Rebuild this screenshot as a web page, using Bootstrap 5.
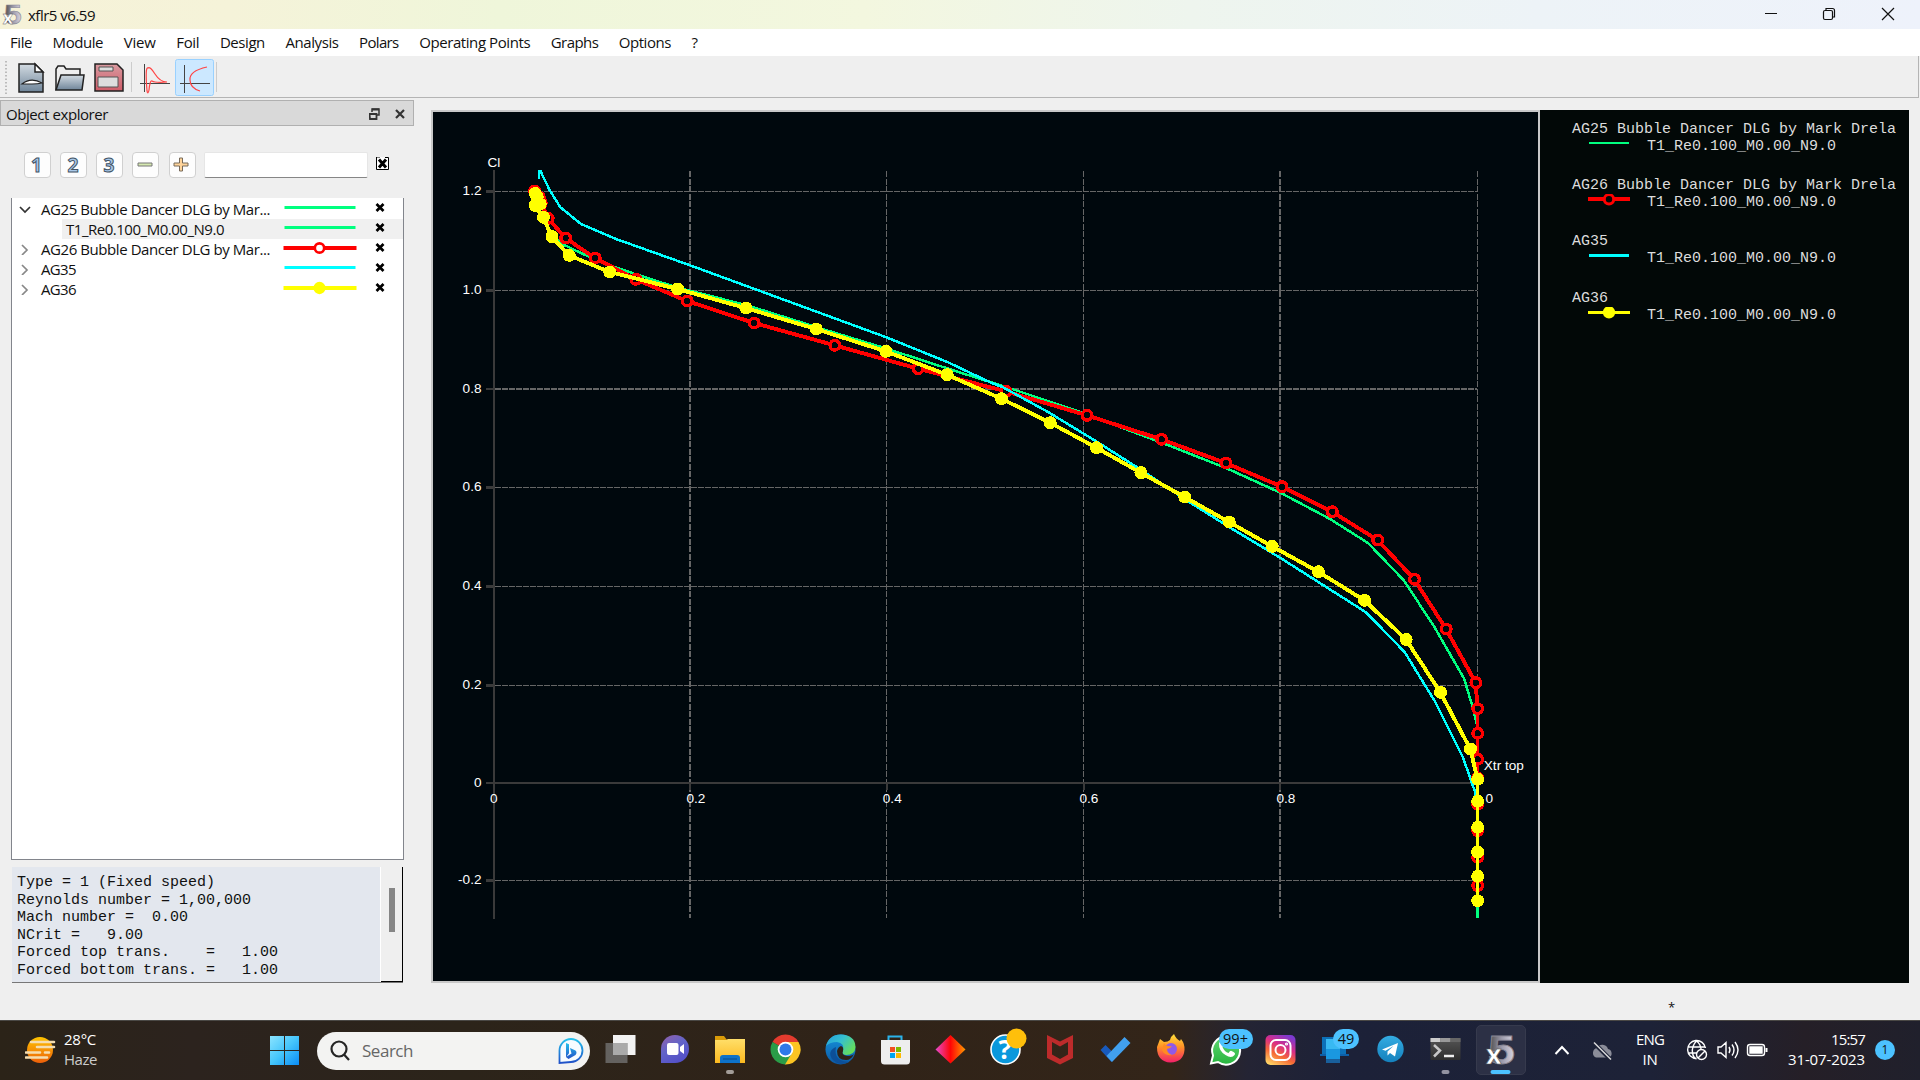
<!DOCTYPE html>
<html lang="en">
<head>
<meta charset="utf-8">
<title>xflr5 v6.59</title>
<link href="https://cdn.jsdelivr.net/npm/bootstrap@5.3.0/dist/css/bootstrap.min.css" rel="stylesheet">
<style>
body{width:1920px;height:1080px;overflow:hidden;background:#efefef;color:#111;font-family:"Open Sans","Noto Sans",sans-serif;font-size:15px;line-height:20px}
svg{display:block;flex:none}
[data-w]{display:inline-block;white-space:nowrap}
.titlebar{height:29px;background:linear-gradient(90deg,#f6f2d8 0,#f5f3d9 12%,#eff6da 26%,#f3f7df 45%,#eef5ee 62%,#edf3f7 80%,#eef2fb 100%)}
.menubar{height:27px;gap:20.6px;padding:0 10px 2px}
.toolbar{height:42px;width:1919px;border-bottom:1px solid #b4b4b4;border-right:1px solid #b4b4b4}
.dock{width:414px;padding-top:2px}
.dock-title{height:26px;background:#d9d9d9;border:1px solid #b0b0b0;padding-left:5px;padding-top:1px}
.dock-tools{padding:26px 0 0 24px;height:72px}
.tool{width:27px;height:26px;border:1px solid #d0d0d0;border-radius:4px;background:#fdfdfd;margin-right:9px}
.filter{width:164px;height:26px;background:#fff;border:1px solid #e6e6e6;border-bottom:1px solid #868686;border-radius:2px;margin-left:-1px}
.tree{width:393px;height:662px;margin-left:11px;background:#fff;border:1px solid #82858c;border-top:0;padding-top:1px}
.tree-row{height:20px}
.tree-row .chev{width:29px;padding-left:7px}
.tree-row .label{width:243px}
.tree-row .swatch{margin-left:-1px}
.tree-row.sel .label,.tree-row.sel .swatch{background:#f0f0f0}
.info{width:391px;height:116px;margin:7px 0 0 12px;border-bottom:1px solid #777}
.info pre{width:369px;background:#e3e7ee;font:15px/17.6px "Liberation Mono",monospace;padding:7px 0 0 5px;border-right:1px solid #fff;overflow:hidden;color:#111}
.info .sbar{width:22px;border-right:1px solid #000;border-bottom:1px solid #000;padding:21px 0 0 8px}
.thumb{width:6px;height:44px;background:#868686}
.graph{width:1109px;height:873px;margin:12px 0 0 17px;border:2px solid #c8c8c8;background:#00080d}
.legend{width:369px;height:873px;margin-top:12px;background:#020807;color:#dcdcdc;font:15px/17px "Liberation Mono",monospace;padding:11px 0 0 32px;white-space:nowrap}
.legend .entry{height:56px}
.entry .name{height:17px}
.entry .run{height:16px}
.entry svg{margin:-3px 16px 0 15px}
.entry.low{height:57px}
.status{position:absolute;left:1668px;top:997px;font-size:13px}
.taskbar{height:60px;border-top:1px solid #4a4845;color:#fff;background:linear-gradient(90deg,#2b2318 0,#2c231e 10%,#2c241a 24%,#302318 45%,#332519 61%,#242434 65%,#1c2138 70%,#1d2237 86%,#251f27 94%,#20202c 100%)}
.weather{width:270px;padding-left:25px}
.search{width:273px;height:38px;border-radius:19px;background:#f3f3f2;margin:0 3px 0 18px;padding:0 6px 0 13px;color:#666;font-size:17px}
.slot{width:55px;height:59px;position:relative;top:-1px}
.bubble{position:absolute;background:#4cc2ff;color:#111;border-radius:10px;height:20px;line-height:20px;text-align:center;font-size:14.5px;top:9px}
.active-app{position:absolute;left:2.5px;top:5px;width:50px;height:50px;border-radius:5px;background:#2c3045;border:1px solid #363a4d}
</style>
<script src="https://cdn.jsdelivr.net/npm/bootstrap@5.3.0/dist/js/bootstrap.bundle.min.js"></script>
</head>
<body class="d-flex flex-column">
<svg width="0" height="0" class="position-absolute">
<defs>
<linearGradient id="five" x1="0" x2="1"><stop offset="0" stop-color="#444"/><stop offset=".5" stop-color="#9a98a8"/><stop offset="1" stop-color="#dcdae8"/></linearGradient>
<linearGradient id="steel" x2="0" y2="1"><stop stop-color="#d3dbe2"/><stop offset="1" stop-color="#6f8599"/></linearGradient>
<linearGradient id="rose" x2="0" y2="1"><stop stop-color="#d99aa0"/><stop offset="1" stop-color="#cf5c68"/></linearGradient>
<linearGradient id="win" x2="1" y2="1"><stop stop-color="#8be4ff"/><stop offset=".5" stop-color="#45c5fb"/><stop offset="1" stop-color="#0a8cf5"/></linearGradient>
<linearGradient id="sun" x2="0" y2="1"><stop stop-color="#ffc400"/><stop offset="1" stop-color="#ec5f0a"/></linearGradient>
<linearGradient id="bing" x2="0" y2="1"><stop stop-color="#25c1ec"/><stop offset="1" stop-color="#2050c8"/></linearGradient>
<linearGradient id="chat" x2=".6" y2="1"><stop stop-color="#9560a8"/><stop offset=".5" stop-color="#6264c8"/><stop offset="1" stop-color="#5450c8"/></linearGradient>
<linearGradient id="fold" x2="0" y2="1"><stop stop-color="#ffdf6a"/><stop offset="1" stop-color="#fcb91f"/></linearGradient>
<linearGradient id="edgeA" x2="1" y2=".6"><stop stop-color="#249fdc"/><stop offset=".5" stop-color="#35bfd0"/><stop offset="1" stop-color="#65de5c"/></linearGradient>
<linearGradient id="edgeB" x2="0" y2="1"><stop stop-color="#1694dd"/><stop offset="1" stop-color="#0c59a4"/></linearGradient>
<linearGradient id="dia"><stop stop-color="#e64bd0"/><stop offset=".5" stop-color="#ff0505"/><stop offset="1" stop-color="#ff9a00"/></linearGradient>
<linearGradient id="fox" x2="0" y2="1"><stop stop-color="#ffe13a"/><stop offset=".45" stop-color="#ff9226"/><stop offset="1" stop-color="#f2206a"/></linearGradient>
<linearGradient id="insta" x1=".2" y1="1" x2=".7" y2="0"><stop stop-color="#ffd465"/><stop offset=".35" stop-color="#f66a35"/><stop offset=".65" stop-color="#d92d87"/><stop offset="1" stop-color="#7d3ad0"/></linearGradient>
<linearGradient id="tg" x2="0" y2="1"><stop stop-color="#34ace2"/><stop offset="1" stop-color="#1581bd"/></linearGradient>
<linearGradient id="wa" x2="0" y2="1"><stop stop-color="#5fd670"/><stop offset="1" stop-color="#27b43e"/></linearGradient>
<linearGradient id="term" x2="0" y2="1"><stop stop-color="#555"/><stop offset="1" stop-color="#2e2e2e"/></linearGradient>
<g id="x"><path d="M1 1L8 8M8 1L1 8" stroke="#000" stroke-width="2.7"/></g>
<g id="logo5"><text x="3" y="29" textLength="27" lengthAdjust="spacingAndGlyphs" font-family="Liberation Sans" font-weight="bold" font-size="41" fill="url(#five)" stroke="#8a8896" stroke-width=".8">5</text><text x="1" y="29" font-family="Open Sans" font-weight="bold" font-size="27" fill="#fff" stroke="#555" stroke-width=".6">x</text></g>
</defs>
</svg>

<header class="titlebar d-flex align-items-center">
<svg width="21" height="21" viewBox="0 -1 32 32" class="flex-shrink-0" style="margin:0 5px 0 2px"><use href="#logo5"/></svg>
<span data-w="67">xflr5 v6.59</span>
<svg class="ms-auto" width="155" height="29" fill="none" stroke="#111" stroke-width="1.2"><path d="M0 13.500h12M117 8l12 12M129 8l-12 12"/><rect x="58.500" y="10.500" width="9" height="9" rx="1.500"/><path d="M61 10.500V8.500h6.500q2 0 2 2V17h-2"/></svg>
</header>

<nav class="menubar bg-white d-flex align-items-center">
<span data-w="22">File</span><span data-w="50.500">Module</span><span data-w="32">View</span><span data-w="23">Foil</span><span data-w="45">Design</span><span data-w="53">Analysis</span><span data-w="39.500">Polars</span><span data-w="111">Operating Points</span><span data-w="47.500">Graphs</span><span data-w="52">Options</span><span>?</span>
</nav>

<div class="toolbar">
<svg width="230" height="41" fill="none" stroke="#222" stroke-width="1.500">
<path d="M6 5v33" stroke="#bbb" stroke-width="2" stroke-dasharray="1.500 2"/>
<path d="M19 8h16l8 8v20H19z" fill="url(#steel)"/><path d="M35 8v8h8z" fill="#fff"/><path d="M22 28q9-7 20-1q-4 1-10 1z" fill="#fff" stroke-width="1.200"/>
<path d="M56 34V13l2-3h6l2 3h14v6" fill="#eee"/><path d="M56 34l5-15h23l-2 15z" fill="url(#steel)"/>
<path d="M95 8h22l6 6v21H95z" fill="url(#rose)"/><path d="M99 11h14v4H99zM98 21h20v10H98z" fill="#ddd" stroke="#555" stroke-width="1"/>
<path d="M131.500 6v30M216.500 6v30" stroke="#ccc" stroke-width="1"/>
<path d="M144.500 8v28M140 27.500h30" stroke="#444" stroke-width="1"/><path d="M147 35q-2-25 1-23q2-2 7 6q5 8 12 8q-12 1-15-1q-2-1-3 9q-1 5-2 1" stroke="#ff4444" stroke-width="1.200"/>
<rect x="175.500" y="3.500" width="38" height="36" rx="2" fill="#cce8ff" stroke="#99d1ff" stroke-width="1"/>
<path d="M184.500 9v28M180 27.500h30" stroke="#444" stroke-width="1"/><path d="M207 11q-18 4-17 13q0 8 10 11" stroke="#ff4444" stroke-width="1.200"/>
</svg>
</div>

<main class="d-flex flex-grow-1">
<aside class="dock">
<div class="dock-title d-flex align-items-center"><span data-w="102">Object explorer</span>
<svg class="ms-auto" width="44" height="24" fill="none" stroke="#333" stroke-width="1.500"><path d="M3 10V7h7v6H8"/><path d="M3 7.500h7M0.500 12h7v5h-6.500z" stroke-width="1.800"/><path d="M27 8l8 8M35 8l-8 8" stroke-width="2.200"/></svg></div>
<div class="dock-tools d-flex">
<div class="tool"><svg width="25" height="24"><text x="6" y="19" font-size="19" font-weight="bold" fill="#a9c9ea" stroke="#456" stroke-width="1">1</text></svg></div>
<div class="tool"><svg width="25" height="24"><text x="6.500" y="19" font-size="19" font-weight="bold" fill="#a9c9ea" stroke="#456" stroke-width="1">2</text></svg></div>
<div class="tool"><svg width="25" height="24"><text x="6.500" y="19" font-size="19" font-weight="bold" fill="#a9c9ea" stroke="#456" stroke-width="1">3</text></svg></div>
<div class="tool"><svg width="25" height="24"><path d="M5 10h14v3H5z" fill="#d5e8b0" stroke="#777"/></svg></div>
<div class="tool" style="margin-left:1px"><svg width="25" height="24"><path d="M4 10h5.500V5h3v5H18v3h-5.500v5h-3v-5H4z" fill="#ffd49a" stroke="#776a5a"/></svg></div>
<div class="filter"></div>
<svg class="ms-2" width="14" height="14" style="margin-top:5px"><path d="M.5 0v12.500h12V.5H9M.5 0H4" fill="#fff" stroke="#000"/><path d="M3 2.500l7 8M10 2.500l-7 8" stroke="#000" stroke-width="3"/></svg>
</div>
<div class="tree" id="tree"></div>
<div class="info d-flex"><pre class="m-0">Type = 1 (Fixed speed)
Reynolds number = 1,00,000
Mach number =  0.00
NCrit =   9.00
Forced top trans.    =   1.00
Forced bottom trans. =   1.00</pre><div class="sbar"><div class="thumb"></div></div></div>
</aside>
<section class="graph"><svg id="plot" width="1105" height="869" viewBox="433 112 1105 869" font-family="Liberation Sans,sans-serif" font-size="13.600" fill="#fff"></svg></section>
<section class="legend" id="legend"></section>
</main>
<span class="status">*</span>

<footer class="taskbar d-flex align-items-center">
<div class="weather d-flex align-items-center">
<svg width="32" height="30"><circle cx="15" cy="14" r="13" fill="url(#sun)"/><path d="M6 6h23M12 11h17M1 16.500h14M20 16.500h4M1 21.500h21" stroke="#f5ddb0" stroke-width="2.600" stroke-linecap="round"/></svg>
<div class="ps-2" style="margin:-3px 0 0 -1px"><div><span data-w="32">28°C</span></div><div style="color:#ccc"><span data-w="33">Haze</span></div></div>
</div>
<svg width="29" height="29"><path d="M0 0h14v14H0zM15 0h14v14H15zM0 15h14v14H0zM15 15h14v14H15z" fill="url(#win)"/></svg>
<div class="search d-flex align-items-center">
<svg width="20" height="22" fill="none" stroke="#252525" stroke-width="2.200"><circle cx="9" cy="9" r="7.500"/><path d="M14 14.500l5 5.500"/></svg>
<span data-w="51" style="margin-left:12px">Search</span>
<svg class="ms-auto" width="26" height="26"><path d="M1.500 25V12.500A11.500 11.500 0 1 1 13 24z" fill="#f6fbff" stroke="url(#bing)" stroke-width="1.800"/><path d="M8 5l3 1.200v9l-3 4zM12 10l5.500 2.500q2 2 0 4.500L10.500 21L8 19l5.500-3.500z" fill="url(#bing)"/></svg>
</div>
<div class="slot"><svg width="55" height="59"><rect x="20" y="15" width="22.500" height="20" fill="#f2f2f2"/><rect x="12.500" y="23" width="22" height="20" fill="#777" fill-opacity=".75"/><path d="M20 23h14.500v12H20z" fill="#aaa"/></svg></div>
<div class="slot"><svg width="55" height="59"><path d="M13 43v-14a14 14 0 1 1 14 14z" fill="url(#chat)"/><rect x="19" y="23" width="11.500" height="12" rx="2" fill="#fff"/><path d="M32 27l4-3v10l-4-3z" fill="#fff"/></svg></div>
<div class="slot"><svg width="55" height="59"><path d="M12 20v-4h9l3 4z" fill="#d99b08"/><path d="M12 20h11l2-1h17v24H12z" fill="url(#fold)"/><path d="M17 43v-5q0-3 3-3h14q3 0 3 3v5z" fill="#0d72c9"/><path d="M20 39h14" stroke="#074a8c"/><rect x="23" y="50" width="8" height="4" rx="2" fill="#a39d98"/></svg></div>
<div class="slot"><svg width="55" height="59"><path d="M27.500 29.500L14.500 22A15 15 0 0 1 40.500 22z" fill="#e33b2e"/><path d="M27.500 29.500V22h13A15 15 0 0 1 27 44.500z" fill="#fcc422"/><path d="M27.500 29.500L34 33L27 44.500A15 15 0 0 1 14.500 22z" fill="#2a9c48"/><circle cx="27.500" cy="29.500" r="7.800" fill="#fff"/><circle cx="27.500" cy="29.500" r="6" fill="#2f79e8"/></svg></div>
<div class="slot"><svg width="55" height="59"><circle cx="27.500" cy="29.500" r="15" fill="url(#edgeB)"/><path d="M13 26Q16 14.500 28 14.500Q42 15 42.500 27Q42 35 33 35Q28 34 30 31Q32 23 24 22Q17 22 13 26z" fill="url(#edgeA)"/><path d="M30 31q-2 4 4 5q5 0 7-2q-3 6-8 6q-9 0-9-9q1-4 4-5q3 1 2 5" fill="#302318"/><path d="M23 27q-3 14 13 15q-10 5-17-3q-5-8 4-12" fill="#0c4f98"/></svg></div>
<div class="slot"><svg width="55" height="59"><path d="M20.500 21v-4.500h13V21" fill="none" stroke="#2bb3ea" stroke-width="2"/><path d="M13 20h29v21q0 3.500-3.500 3.500h-22q-3.500 0-3.500-3.500z" fill="#eee"/><path d="M22 27h5v5h-5z" fill="#f25022"/><path d="M28 27h5v5h-5z" fill="#7fba00"/><path d="M22 33h5v5h-5z" fill="#00a4ef"/><path d="M28 33h5v5h-5z" fill="#ffb900"/></svg></div>
<div class="slot"><svg width="55" height="59"><path d="M27.500 15L42.500 29.500L27.500 43.500L12.500 29.500z" fill="url(#dia)"/></svg></div>
<div class="slot"><svg width="55" height="59"><circle cx="27.500" cy="29.500" r="14.500" fill="#0a98dc" stroke="#fff" stroke-width="1.600"/><text x="20.500" y="39" font-size="27" font-weight="bold" fill="#fff">?</text><circle cx="38.500" cy="18.500" r="10" fill="#ffbf0b"/></svg></div>
<div class="slot"><svg width="55" height="59"><path d="M14 15l13 6.500L40 15v23l-13 6.500L14 38zM19 22v12.500l8 4.500l8-4.500V22l-8 4.500z" fill="#bd2b2b" fill-rule="evenodd"/></svg></div>
<div class="slot"><svg width="55" height="59"><path d="M12.500 30l5-5l10 10l-4 7z" fill="#185abd"/><path d="M36.500 17l6 6L24 42l-5.500-6z" fill="#41a0ef"/></svg></div>
<div class="slot"><svg width="55" height="59"><path d="M14 27l3-8l4 3q4 0 6-2q1-4 4-6q2 5 6 7l1-2q4 5 3.500 11q-1 12-14 12.500Q14 42 14 27z" fill="url(#fox)"/><circle cx="28" cy="29" r="6" fill="#9059e8"/><path d="M21 23q2 4 8 3q-2 3-5 3q0 4 5 6q-8 1-10-5z" fill="#ff8b22"/></svg></div>
<div class="slot"><svg width="55" height="59"><path d="M13 43.500l2-8A14 14 0 1 1 20 42z" fill="url(#wa)" stroke="#fff" stroke-width="2"/><path d="M21 23q2-3 4 1q1 1-.5 3q2 5 6 6q2-3 3-2q5 2 3 4q-3 4-9 0q-7-4-6.500-12" fill="#fff"/></svg><span class="bubble" style="left:20.500px;width:34px">99+</span></div>
<div class="slot"><svg width="55" height="59" fill="none" stroke="#fff" stroke-width="2"><rect x="12.500" y="15" width="30" height="30" rx="5" fill="url(#insta)" stroke="none"/><rect x="17.500" y="20" width="20" height="20" rx="5.500"/><circle cx="27.500" cy="30" r="5"/><circle cx="33.500" cy="24" r=".6"/></svg></div>
<div class="slot"><svg width="55" height="59"><path d="M14 17h24v19H14z" fill="#0c70b8"/><path d="M12 34h10v2H12zM30 34h11v2H30z" fill="#0d5fa8"/><path d="M18 19h14v24H18z" fill="#1a98e0"/><path d="M18 19h14v10H18z" fill="#38b9f2"/><path d="M18 39h14v4H18z" fill="#195f9b"/></svg><span class="bubble" style="left:25px;width:26px">49</span></div>
<div class="slot"><svg width="55" height="59"><circle cx="27.500" cy="29" r="13.200" fill="url(#tg)"/><path d="M19 29.500l16-6.500l-3 13.500l-5-3.500l-2.500 2.500v-4l6-5.500l-8 4.800z" fill="#fff"/></svg></div>
<div class="slot"><svg width="55" height="59"><rect x="12.500" y="18" width="30" height="22" rx="1" fill="url(#term)"/><path d="M12.500 18h10v4h-10z" fill="#ccc"/><path d="M22.500 18h10v4h-10z" fill="#999"/><path d="M32.500 18h10v4h-10z" fill="#666"/><path d="M16 25l6 5.500l-6 6" fill="none" stroke="#c8c8c8" stroke-width="2.500"/><path d="M26 36h10" stroke="#eee" stroke-width="2.500"/><rect x="23.500" y="50" width="8" height="4" rx="2" fill="#9292a0"/></svg></div>
<div class="slot"><div class="active-app"></div><svg class="position-relative" width="55" height="59"><use href="#logo5" x="12" y="15"/><rect x="17.500" y="50" width="20" height="4" rx="2" fill="#4cc2ff"/></svg></div>
<div class="d-flex align-items-center flex-grow-1 ps-4">
<svg width="68" height="26" fill="none" style="margin-left:2px"><path d="M1.500 16l6.500-7l6.500 7" stroke="#fff" stroke-width="2"/><path d="M42 19.500a5 5 0 0 1 1-9.500a6 6 0 0 1 11 1a4.500 4.500 0 0 1 1 8.500z" fill="#8b8d99"/><path d="M39 4l18 18" stroke="#1d2237" stroke-width="4"/><path d="M40 4.500l17 17" stroke="#ddd" stroke-width="1.400"/></svg>
<div class="text-center" style="width:68px;margin:-3px 0 0 -6px"><div><span data-w="28">ENG</span></div><div><span data-w="15">IN</span></div></div>
<svg width="84" height="26" fill="none" stroke="#fff" stroke-width="1.400" style="margin:-2px 0 0 2px"><path d="M19.500 11a9 9 0 1 0-9 10.500M2 10h17M2 16h9M10.500 4q-5 5-4 12q1 5 4 6M10.500 4q4 3 4.500 8"/><circle cx="15.500" cy="17.500" r="5"/><path d="M12 21l7-7"/><path d="M32 10h3l5-4.500v15L35 16h-3zM43 10q2 3 0 6M46 7.500q4 5.500 0 11M49 5q6 8 0 16"/><rect x="61.500" y="7.500" width="17" height="11" rx="2.500"/><path d="M64 10h12v6H64z" fill="#fff"/><path d="M80.500 11v4" stroke-width="2"/></svg>
<div class="text-end ms-auto" style="margin-top:-4px"><div><span data-w="34">15:57</span></div><div><span data-w="77">31-07-2023</span></div></div>
<div class="rounded-circle text-center" style="width:20px;height:20px;line-height:20px;background:#4cc2ff;color:#111;font-size:12px;margin:-1px 25px 0 10px">1</div>
</div>
</footer>

<script>
// object tree
const rows = [
  ['down','AG25 Bubble Dancer DLG by Mar...',229,'#00ff7f',3,''],
  ['','T1_Re0.100_M0.00_N9.0',158,'#00ff7f',3,''],
  ['right','AG26 Bubble Dancer DLG by Mar...',229,'#f00',4,'ring'],
  ['right','AG35',35,'#0ff',3,''],
  ['right','AG36',35,'#ff0',4,'dot']];
document.getElementById('tree').innerHTML = rows.map(([c,t,w,col,sw,m]) => {
  const chev = c ? `<svg width="12" height="12" fill="none" stroke="${c=='down'?'#333':'#888'}" stroke-width="1.700"><path d="${c=='down'?'M1 4l5 5l5-5':'M3 2l5 5l-5 5'}"/></svg>` : '';
  const mark = m ? `<circle cx="36.500" cy="9" r="${m=='ring'?4.7:4.8}" fill="${m=='ring'?'#fff':col}" stroke="${col}" stroke-width="2.700"/>` : '';
  const label = `<span data-w="${w}">${t}</span>`;
  const body = c ? `<div class="label">${label}</div>` : `<div style="width:21px"></div><div class="label ps-1" style="width:222px">${label}</div>`;
  const y = m ? 9 : 8.5;
  return `<div class="tree-row d-flex align-items-center ${c?'':'sel'}"><div class="chev">${chev}</div>${body}<svg class="swatch" width="120" height="20"><path d="M${m?'.5':'1.500'} ${y}h${m?73:71}" stroke="${col}" stroke-width="${sw}"/>${mark}<use href="#x" x="92.500" y="4"/></svg></div>`;
}).join('');

// legend
const T = 'T1_Re0.100_M0.00_N9.0';
document.getElementById('legend').innerHTML = [
  ['AG25 Bubble Dancer DLG by Mark Drela','#00ff7f',2,''],
  ['AG26 Bubble Dancer DLG by Mark Drela','#f00',4,'ring'],
  ['AG35','#0ff',3,''],['AG36','#ff0',3,'dot']].map(([n,c,w,m],i) => `<div class="entry ${i==2?'low':''}"><div class="name">${n}</div><div class="run d-flex align-items-center"><svg width="44" height="14"><path d="M${m?1:2} ${w%2?5.5:5}h${m?42:40}" stroke="${c}" stroke-width="${w}"/>${m?`<circle cx="22" cy="5.300" r="4.700" fill="${m=='ring'?'#020807':c}" stroke="${c}" stroke-width="3"/>`:''}</svg><span>${T}</span></div></div>`).join('');

// polar curves, Cl against upper transition point
const xs = [494,690,886.5,1083.5,1280,1477.5], ys = [[191.5,'1.2'],[290.5,'1.0'],[389,'0.8'],[487.5,'0.6'],[586.5,'0.4'],[685.5,'0.2'],[783,'0'],[880.5,'-0.2']];
let s = '<g shape-rendering="crispEdges" fill="none">';
xs.slice(1).forEach(x => s += `<path d="M${x} 171V918" stroke="#666" stroke-width="${x%1?1:2}" stroke-dasharray="6.300 1.200"/>`);
ys.forEach(([y,l]) => { if (l!='0') s += `<path d="M495 ${y}H1477" stroke="#666" stroke-width="${y%1?1:2}" stroke-dasharray="6 1"/>`;
  s += `<path d="M486 ${y}h8" stroke="#3a3a3a" stroke-width="${l=='0'||l=='0.8'?2:3}"/>`; });
s += '<path d="M494 170V919M494 783H1477M690 783v7M886.500 783v7M1083.500 783v7M1280 783v7" stroke="#3a3a3a" stroke-width="2"/>';
const green='537,208 543,218 551,232 560,243 583,254 606,264 635,274 677,287.5 746,305 816,327 886,348.5 960,372.5 1003,386 1084,413 1120,427 1160,442 1226,468 1281,493 1330,519 1368,543 1404,580.5 1435,628 1464.3,679 1472,705 1477,725 1477.5,918';
const red='534.5,191 539,197 541,203 548,218.300 565.4,238 595,258 635.7,279.3 687,301 754,323 834.6,345.3 918,368.7 1005.7,391.3 1086.8,415.3 1161.4,439.3 1225.7,463 1281.8,486.7 1332,511.7 1377.5,540 1414.3,579.3 1446,629 1475.7,682.7 1477.5,708.7 1477.5,733.3 1477.5,759.3 1477.5,778 1477.5,804.3 1477.5,830.7 1477.5,857.3 1477.5,885.7';
const cyan='538.8,179 538.8,171 540.4,171 549.6,190 560.4,207.3 581,224 616.8,239.3 690,265.3 886.4,337.3 948,362.3 990,382.3 1003,387.3 1047.5,411.7 1095.7,441 1138.6,468.3 1188.6,501.7 1229.6,527.3 1280,557.7 1366,612.3 1404.6,652 1435.3,702 1462.7,756.7 1475,791.7 1477,803';
const yellow='535,193.5 537,197 540,204 535,205.5 543.2,217.3 551.8,236.7 569,255.3 609.6,272 677.5,289 745.7,308 816,329 885.7,351.3 947,374.7 1001.4,398.7 1050,422.7 1096.4,447.7 1140.7,472.7 1184.6,497 1229,522 1272,546.3 1318.2,571.7 1364.3,600.3 1406,639.5 1440.3,692.3 1470.3,749 1477.5,779.3 1477.5,801.3 1477.5,827.3 1477.5,852 1477.5,876.3 1477.5,900.7';
const line = (p,c,w) => `<polyline points="${p}" stroke="${c}" stroke-width="${w}"/>`;
const dots = (p,c,f) => p.split(' ').map(q => { const [x,y]=q.split(','); return `<circle cx="${+x+.2}" cy="${y}" r="4.800" fill="${f}" stroke="${c}" stroke-width="3.400"/>`; }).join('');
s += line(green,'#00ff7f',2.5)+line(red,'#f00',3.9)+dots(red,'#f00','#00080d')+line(cyan,'#0ff',2.5)+line(yellow,'#ff0',3.9)+dots(yellow,'#ff0','#ff0')+'</g>';
ys.forEach(([y,l]) => s += `<text x="481.500" y="${y+3.5}" text-anchor="end">${l}</text>`);
[['0',490],['0.2',686.5],['0.4',882.8],['0.6',1079.5],['0.8',1276.5],['0',1485.5]].forEach(([l,x]) => s += `<text x="${x}" y="803">${l}</text>`);
s += '<text x="487.500" y="166.500">Cl</text><text x="1483.800" y="770">Xtr top</text>';
document.getElementById('plot').innerHTML = s;

document.querySelectorAll('[data-w]').forEach(e => {
  e.style.letterSpacing = ((+e.dataset.w - e.getBoundingClientRect().width) / e.textContent.length) + 'px';
});
</script>
</body>
</html>
